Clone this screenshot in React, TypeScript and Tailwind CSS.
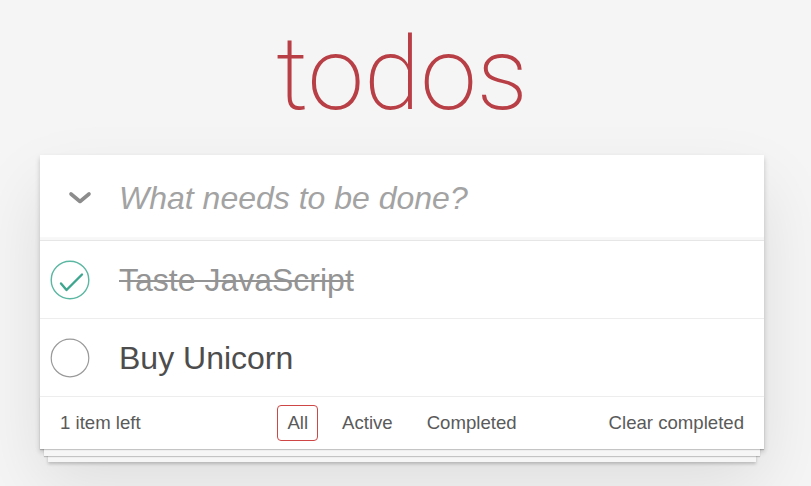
const todos = [
  { id: 1, title: 'Taste JavaScript', completed: true },
  { id: 2, title: 'Buy Unicorn', completed: false },
]

function CheckCircle({ checked }: { checked: boolean }) {
  return (
    <svg width="40" height="40" viewBox="0 0 40 40" className="shrink-0">
      {checked ? (
        <>
          <circle cx="20" cy="20" r="18.8" fill="none" stroke="#5bb7a2" strokeWidth="1.4" />
          <path d="M11 23.5 L16.5 30 L32 14.5" fill="none" stroke="#3ea68f" strokeWidth="2.4" strokeLinecap="round" strokeLinejoin="round" />
        </>
      ) : (
        <circle cx="20" cy="20" r="18.8" fill="none" stroke="#9a9a9a" strokeWidth="1.2" />
      )}
    </svg>
  )
}

export default function App() {
  const left = todos.filter((t) => !t.completed).length

  return (
    <div className="h-[486px] overflow-hidden bg-[#f5f5f5] font-['Liberation_Sans',Arial,sans-serif] text-[#4d4d4d]">
      <div className="ml-[40px] w-[724px]">
        <h1 className="flex h-[155px] justify-center pt-[23px] font-['Roboto','Liberation_Sans',sans-serif] text-[102px] font-extralight leading-none text-[#b83f45]">
          todos
        </h1>

        <section className="bg-white shadow-[0_3px_5px_rgba(0,0,0,0.2),0_33px_66px_rgba(0,0,0,0.1)]">
          <header className="flex h-[85px] items-center shadow-[inset_0_-3px_1px_rgba(0,0,0,0.03)]">
            <div className="flex w-[79px] shrink-0 justify-center">
              <svg width="24" height="14" viewBox="0 0 24 14">
                <path d="M3 3 L12 10.5 L21 3" fill="none" stroke="#8c8c8c" strokeWidth="3.6" strokeLinecap="round" strokeLinejoin="round" />
              </svg>
            </div>
            <span className="text-[32px] italic text-[#a3a3a3]">What needs to be done?</span>
          </header>

          <ul className="border-t border-[#e6e6e6]">
            {todos.map((t) => (
              <li key={t.id} className="flex h-[78px] items-center border-b border-[#ededed] pl-[10px]">
                <CheckCircle checked={t.completed} />
                <span
                  className={
                    t.completed
                      ? 'ml-[29px] text-[32px] text-[#949494] line-through decoration-[#949494] decoration-[1.5px]'
                      : 'ml-[29px] text-[32px] text-[#4d4d4d]'
                  }
                >
                  {t.title}
                </span>
              </li>
            ))}
          </ul>

          <footer className="grid h-[52px] grid-cols-[1fr_auto_1fr] items-center px-[20px] text-[18.6px] text-[#5a5a5a] shadow-[0_1px_1px_rgba(0,0,0,0.2),0_11px_0_-4px_#f6f6f6,0_12px_1px_-4px_rgba(0,0,0,0.2),0_21px_0_-8px_#f6f6f6,0_23px_3px_-8px_rgba(0,0,0,0.2)]">
            <span>
              {left} item left
            </span>
            <div className="flex items-center gap-[14px]">
              <span className="rounded-[4px] border border-[#ce4646] px-[9px] py-[3px]">All</span>
              <span className="rounded-[4px] border border-transparent px-[9px] py-[3px]">Active</span>
              <span className="rounded-[4px] border border-transparent px-[9px] py-[3px]">Completed</span>
            </div>
            <span className="justify-self-end">Clear completed</span>
          </footer>
        </section>
      </div>
    </div>
  )
}
